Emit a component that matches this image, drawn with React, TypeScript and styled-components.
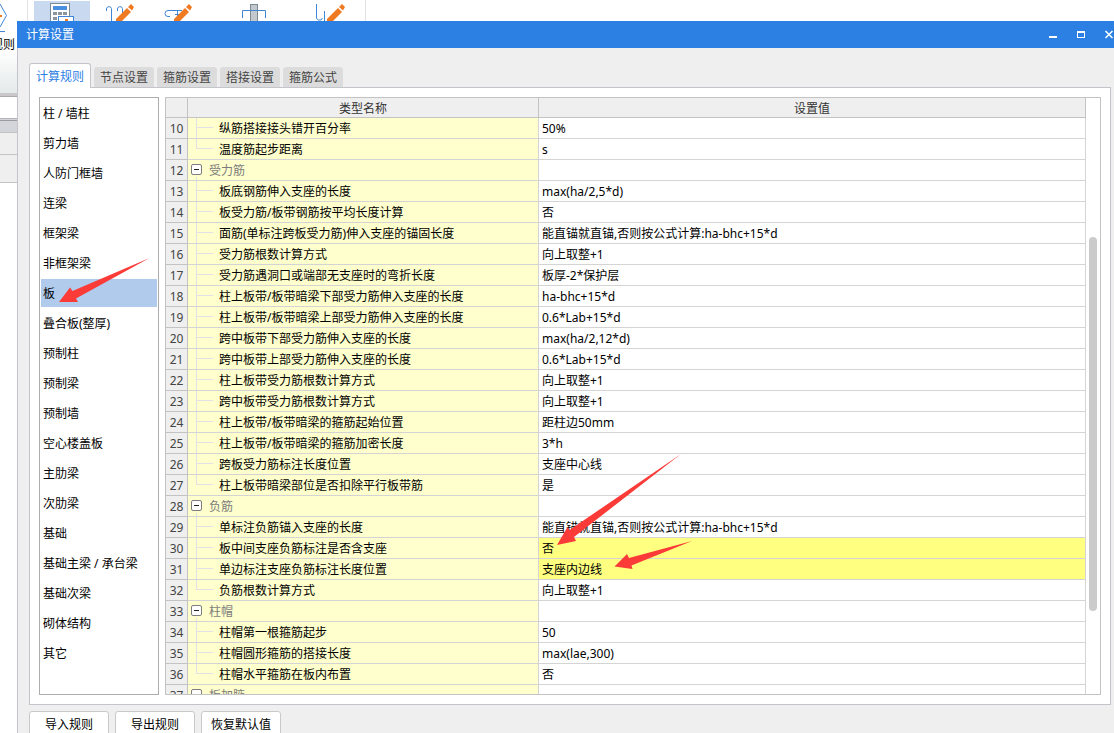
import React, { useState } from "react";
import styled, { createGlobalStyle, css } from "styled-components";

const GlobalStyle = createGlobalStyle`
  * { box-sizing: border-box; }
  body {
    margin: 0;
    overflow: hidden;
    background: #fff;
    font: 12px/18px "Noto Sans", "Noto Sans CJK SC", sans-serif;
    color: #000;
  }
  button { font: inherit; color: inherit; border: 0; padding: 0; background: none; cursor: default; }
`;

const line = "#c3c3c3";
const softLine = "#d4d4d4";
const treeLine = "#e0e0e6";

const Page = styled.main`
  position: relative;
  height: 100vh;
  overflow: hidden;
`;

/* ---------- main window behind the dialog ---------- */

const Backdrop = styled.div`
  display: flex;
`;

const SideStrip = styled.div`
  display: flex;
  flex-direction: column;
  flex: none;
  width: 28px;
`;

const RuleTool = styled.button`
  display: flex;
  flex-direction: column;
  align-items: flex-end;
  width: 28px;
  height: 93px;
  padding-right: 12px;
  border-right: 1px solid #e3e3e3;
  background: linear-gradient(#fff 50px, #e4e9e9);
  overflow: hidden;
`;

const RuleLabel = styled.span`
  flex: none;
  white-space: nowrap;
`;

const StripBand = styled.div<{ $height: number; $fill: string; $edge?: string }>`
  height: ${(p) => p.$height}px;
  background: ${(p) => p.$fill};
  border-bottom: ${(p) => (p.$edge ? `1px solid ${p.$edge}` : "0")};
`;

const Ribbon = styled.div`
  display: flex;
  height: 48px;
  padding: 1px 0 0 6px;
  width: 338px;
  border-right: 1px solid #e3e3e3;
`;

const RibbonButton = styled.button<{ $active?: boolean; $width: number }>`
  width: ${(p) => p.$width}px;
  display: flex;
  justify-content: center;
  background: ${(p) => (p.$active ? "#c8d9f0" : "transparent")};
`;

/* ---------- dialog ---------- */

const Dialog = styled.section`
  position: absolute;
  inset: 21px 0 -12px 17px;
  display: flex;
  flex-direction: column;
  background: #efefef;
`;

const TitleBar = styled.header`
  display: flex;
  align-items: center;
  flex: none;
  height: 27px;
  padding-left: 9px;
  background: #2d80e3;
  color: #fff;
`;

const Title = styled.h1`
  flex: 1;
  margin: 0;
  font: inherit;
`;

const WindowButton = styled.button`
  display: flex;
  justify-content: center;
  width: 28px;
`;

const WindowButtons = styled.div`
  display: flex;
  margin-right: -9px;
`;

const Body = styled.div`
  display: flex;
  flex-direction: column;
  flex: 1;
  min-height: 0;
  padding: 15px 3px 0 11px;
  border-left: 1px solid #c4c5ca;
`;

const Tabs = styled.div`
  display: flex;
  align-items: flex-end;
  gap: 3px;
  flex: none;
  height: 25px;
  margin-bottom: -1px;
`;

const Tab = styled.button<{ $active: boolean }>`
  width: 60px;
  height: 20px;
  margin-bottom: 1px;
  padding-top: 2px;
  border-radius: 3px 3px 0 0;
  background: #dcdcdc;
  color: #444;
  ${(p) =>
    p.$active &&
    css`
      width: 62px;
      height: 25px;
      margin-bottom: 0;
      border: 1px solid #c4c5ca;
      border-bottom: 0;
      background: #fff;
      color: #2d80e3;
      z-index: 1;
    `}
`;

const Panel = styled.div`
  display: flex;
  gap: 6px;
  flex: 1;
  min-height: 0;
  padding: 9px;
  border: 1px solid #c4c5ca;
  background: #fff;
`;

const Categories = styled.nav`
  display: flex;
  flex-direction: column;
  gap: 2px;
  flex: none;
  width: 120px;
  padding: 1px;
  border: 1px solid #adadad;
  overflow: hidden;
`;

const Category = styled.button<{ $active: boolean }>`
  flex: none;
  height: 28px;
  padding: 2px 0 0 2px;
  text-align: left;
  background: ${(p) => (p.$active ? "#b1cbec" : "transparent")};
`;

const Grid = styled.div`
  display: flex;
  flex: 1;
  min-width: 0;
  border: 1px solid ${line};
  overflow: hidden;
`;

const TableView = styled.div`
  flex: 1;
  min-width: 0;
  overflow: hidden;
`;

const Table = styled.table`
  width: 100%;
  table-layout: fixed;
  border-spacing: 0;
`;

const Col = styled.col<{ $width?: number }>`
  width: ${(p) => (p.$width ? `${p.$width}px` : "auto")};
`;

const Head = styled.th`
  height: 20px;
  padding: 2px 0 0;
  line-height: 17px;
  border: solid ${line};
  border-width: 0 1px 1px 0;
  background: #efefef;
  color: #333;
  font-weight: normal;
`;

const Cell = styled.td`
  height: 21px;
  padding: 2px 0 0;
  border: solid ${softLine};
  border-width: 0 1px 1px 0;
  white-space: nowrap;
`;

const NumberCell = styled(Cell)`
  border-color: ${line};
  background: #efefef;
  color: #444;
  text-align: center;
`;

const NameCell = styled(Cell)`
  padding: 0;
  background: #ffffcd;
`;

const ValueCell = styled(Cell)<{ $marked?: boolean }>`
  padding-left: 3px;
  background: ${(p) => (p.$marked ? "#ffff80" : "#fff")};
`;

const Leaf = styled.div`
  display: flex;
  gap: 6px;
  height: 20px;
  padding-left: 8px;
  line-height: 22px;
`;

const Branch = styled.span<{ $last?: boolean }>`
  width: 17px;
  background:
    linear-gradient(${treeLine}, ${treeLine}) 0 0 / 1px ${(p) => (p.$last ? "10px" : "100%")} no-repeat,
    linear-gradient(${treeLine}, ${treeLine}) 0 9px / 17px 1px no-repeat;
`;

const Group = styled.div`
  display: flex;
  align-items: flex-start;
  gap: 7px;
  height: 20px;
  padding-left: 3px;
  line-height: 22px;
  color: #7c7c7c;
  background: linear-gradient(${treeLine}, ${treeLine}) 8px 100% / 1px 3px no-repeat;
`;

const Toggle = styled.button`
  display: flex;
  align-items: center;
  justify-content: center;
  width: 11px;
  height: 11px;
  margin-top: 4px;
  border: 1px solid #7e7e7e;
  border-radius: 2px;
  background: #fff;
  &::before {
    content: "";
    width: 5px;
    height: 1px;
    background: #222;
  }
`;

const ScrollTrack = styled.div`
  flex: none;
  width: 14px;
  padding: 139px 3px 0;
`;

const ScrollThumb = styled.div`
  height: 374px;
  border-radius: 4px;
  background: #cbcbcb;
`;

const Footer = styled.footer`
  display: flex;
  gap: 6px;
  flex: none;
  padding: 6px 0 8px;
`;

const FooterButton = styled.button`
  width: 80px;
  height: 26px;
  padding-top: 2px;
  border: 1px solid #c9c9c9;
  border-radius: 3px;
  background: #fff;
`;

const Annotations = styled.svg`
  position: absolute;
  top: 0;
  left: 0;
  pointer-events: none;
`;

/* ---------- data ---------- */

const tabs = ["计算规则", "节点设置", "箍筋设置", "搭接设置", "箍筋公式"];

const categories = [
  "柱 / 墙柱", "剪力墙", "人防门框墙", "连梁", "框架梁", "非框架梁", "板",
  "叠合板(整厚)", "预制柱", "预制梁", "预制墙", "空心楼盖板", "主肋梁", "次肋梁",
  "基础", "基础主梁 / 承台梁", "基础次梁", "砌体结构", "其它",
];

type Row = { name: string; value?: string; group?: boolean; last?: boolean; marked?: boolean };

const firstRow = 10;
const rows: Row[] = [
  { name: "纵筋搭接接头错开百分率", value: "50%" },
  { name: "温度筋起步距离", value: "s", last: true },
  { name: "受力筋", group: true },
  { name: "板底钢筋伸入支座的长度", value: "max(ha/2,5*d)" },
  { name: "板受力筋/板带钢筋按平均长度计算", value: "否" },
  { name: "面筋(单标注跨板受力筋)伸入支座的锚固长度", value: "能直锚就直锚,否则按公式计算:ha-bhc+15*d" },
  { name: "受力筋根数计算方式", value: "向上取整+1" },
  { name: "受力筋遇洞口或端部无支座时的弯折长度", value: "板厚-2*保护层" },
  { name: "柱上板带/板带暗梁下部受力筋伸入支座的长度", value: "ha-bhc+15*d" },
  { name: "柱上板带/板带暗梁上部受力筋伸入支座的长度", value: "0.6*Lab+15*d" },
  { name: "跨中板带下部受力筋伸入支座的长度", value: "max(ha/2,12*d)" },
  { name: "跨中板带上部受力筋伸入支座的长度", value: "0.6*Lab+15*d" },
  { name: "柱上板带受力筋根数计算方式", value: "向上取整+1" },
  { name: "跨中板带受力筋根数计算方式", value: "向上取整+1" },
  { name: "柱上板带/板带暗梁的箍筋起始位置", value: "距柱边50mm" },
  { name: "柱上板带/板带暗梁的箍筋加密长度", value: "3*h" },
  { name: "跨板受力筋标注长度位置", value: "支座中心线" },
  { name: "柱上板带暗梁部位是否扣除平行板带筋", value: "是", last: true },
  { name: "负筋", group: true },
  { name: "单标注负筋锚入支座的长度", value: "能直锚就直锚,否则按公式计算:ha-bhc+15*d" },
  { name: "板中间支座负筋标注是否含支座", value: "否", marked: true },
  { name: "单边标注支座负筋标注长度位置", value: "支座内边线", marked: true },
  { name: "负筋根数计算方式", value: "向上取整+1", last: true },
  { name: "柱帽", group: true },
  { name: "柱帽第一根箍筋起步", value: "50" },
  { name: "柱帽圆形箍筋的搭接长度", value: "max(lae,300)" },
  { name: "柱帽水平箍筋在板内布置", value: "否", last: true },
  { name: "板加腋", group: true },
];

/* ---------- drawings ---------- */

const Pencil = ({ x }: { x: number }) => (
  <g transform={`translate(${x} 0)`} fill="#f07a22" stroke="none">
    <path d="M2 20V18L13 7 17 11 8 20Z" />
    <path d="M14 6 17 3 20 6 18 9.500Z" />
  </g>
);

const HexIcon = () => (
  <svg width="15" height="36" viewBox="0 0 15 36" fill="none" stroke="#3f86d6">
    <path d="M0 4 6.500 15.500 0 27M0 31.500H5" />
    <path d="M0 16H2" stroke="#f07a22" strokeWidth="2" />
  </svg>
);

const CalculatorIcon = () => (
  <svg width="24" height="20" viewBox="0 0 24 20">
    <rect x=".5" y="2.500" width="19" height="22" fill="#fff" stroke="#7c8a94" />
    <rect x="3" y="5" width="14" height="4" fill="#4a90e0" />
    <path d="M3 11h4v3H3zM8 11h4v3H8zM13 11h4v3h-4zM3 16h4v3H3z" fill="#8a959d" />
    <rect x="8.500" y="15.500" width="15" height="8" fill="#fff" stroke="#3f86d6" />
    <rect x="15" y="18" width="3" height="3" fill="#f07a22" />
  </svg>
);

const HooksIcon = () => (
  <svg width="30" height="20" viewBox="0 0 30 20" fill="none" stroke="#3f86d6">
    <path d="M1.500 10V9a2.500 2.500 0 0 1 5-1.500V20M12.500 10V9a2.500 2.500 0 0 1 5-1.500V12" />
    <Pencil x={9} />
  </svg>
);

const BarIcon = () => (
  <svg width="30" height="20" viewBox="0 0 30 20" fill="none" stroke="#3f86d6">
    <path d="M19 9.500H5a3 3 0 0 0 0 6h2M12 13.500h4M14.500 9.500V17" />
    <Pencil x={9} />
  </svg>
);

const ColumnIcon = () => (
  <svg width="24" height="20" viewBox="0 0 24 20" fill="none">
    <rect x="8.500" y="3.500" width="7" height="20" fill="#c3c8cc" stroke="#7c8a94" />
    <path d="M.5 17V9.500h23V17" stroke="#3f86d6" />
  </svg>
);

const StirrupIcon = () => (
  <svg width="30" height="20" viewBox="0 0 30 20" fill="none" stroke="#3f86d6">
    <path d="M1.500 3v12a3 3 0 0 0 6 2M9.500 10v10" />
    <Pencil x={10} />
  </svg>
);

const ribbonTools = [
  { label: "计算设置", icon: <CalculatorIcon />, width: 56, active: true },
  { label: "钢筋弯钩", icon: <HooksIcon />, width: 60 },
  { label: "钢筋编辑", icon: <BarIcon />, width: 56 },
  { label: "柱", icon: <ColumnIcon />, width: 96 },
  { label: "箍筋编辑", icon: <StirrupIcon />, width: 56 },
];

const windowControls = [
  { label: "最小化", icon: <path d="M1 6h8v2H1z" fill="#fff" /> },
  { label: "最大化", icon: <path d="M1 1h8v7H1zM2 3v4h6V3z" fill="#fff" fillRule="evenodd" /> },
  { label: "关闭", icon: <path d="M1.500 1 8.500 8M8.500 1 1.500 8" stroke="#fff" strokeWidth="1.500" /> },
];

export default function App() {
  const [tab, setTab] = useState(0);
  const [category, setCategory] = useState(6);

  return (
    <Page>
      <GlobalStyle />
      <Backdrop>
        <SideStrip>
          <RuleTool>
            <HexIcon />
            <RuleLabel>计算规则</RuleLabel>
          </RuleTool>
          <StripBand $height={4} $fill="#c9c9cc" $edge="#a9a9ad" />
          <StripBand $height={22} $fill="#fff" $edge="#b4b4b6" />
          <StripBand $height={2} $fill="#d3d5db" $edge="#9b9ca0" />
          <StripBand $height={12} $fill="#d3d5db" $edge={line} />
          <StripBand $height={22} $fill="#efefef" $edge={line} />
          <StripBand $height={28} $fill="#efefef" $edge={line} />
        </SideStrip>
        <Ribbon>
          {ribbonTools.map((t) => (
            <RibbonButton key={t.label} aria-label={t.label} $active={t.active} $width={t.width}>
              {t.icon}
            </RibbonButton>
          ))}
        </Ribbon>
      </Backdrop>

      <Dialog role="dialog" aria-labelledby="dialog-title">
        <TitleBar>
          <Title id="dialog-title">计算设置</Title>
          <WindowButtons>
            {windowControls.map((c) => (
              <WindowButton key={c.label} aria-label={c.label}>
                <svg width="10" height="9" viewBox="0 0 10 9">{c.icon}</svg>
              </WindowButton>
            ))}
          </WindowButtons>
        </TitleBar>
        <Body>
          <Tabs role="tablist">
            {tabs.map((t, i) => (
              <Tab key={t} role="tab" aria-selected={i === tab} $active={i === tab} onClick={() => setTab(i)}>
                {t}
              </Tab>
            ))}
          </Tabs>
          <Panel role="tabpanel">
            <Categories>
              {categories.map((c, i) => (
                <Category key={c} $active={i === category} onClick={() => setCategory(i)}>
                  {c}
                </Category>
              ))}
            </Categories>
            <Grid>
              <TableView>
                <Table>
                  <colgroup>
                    <Col $width={22} />
                    <Col $width={351} />
                    <Col />
                  </colgroup>
                  <thead>
                    <tr>
                      <Head />
                      <Head>类型名称</Head>
                      <Head>设置值</Head>
                    </tr>
                  </thead>
                  <tbody>
                    {rows.map((r, i) => (
                      <tr key={i}>
                        <NumberCell>{firstRow + i}</NumberCell>
                        <NameCell>
                          {r.group ? (
                            <Group>
                              <Toggle aria-label={`折叠${r.name}`} />
                              {r.name}
                            </Group>
                          ) : (
                            <Leaf>
                              <Branch $last={r.last} />
                              {r.name}
                            </Leaf>
                          )}
                        </NameCell>
                        <ValueCell $marked={r.marked}>{r.value}</ValueCell>
                      </tr>
                    ))}
                  </tbody>
                </Table>
              </TableView>
              <ScrollTrack>
                <ScrollThumb />
              </ScrollTrack>
            </Grid>
          </Panel>
          <Footer>
            <FooterButton>导入规则</FooterButton>
            <FooterButton>导出规则</FooterButton>
            <FooterButton>恢复默认值</FooterButton>
          </Footer>
        </Body>
      </Dialog>

      <Annotations width="700" height="600" viewBox="0 0 700 600" fill="#fb3b37" aria-hidden="true">
        <path d="M59 302 70 287.500 72.500 291 149.500 258 76 298.500 78 302Z" />
        <path d="M557 545 567.500 527 569.500 530 681 454 574 537 576 541Z" />
        <path d="M614.500 566.500 627 554 629 558 692 541 631.500 565.500 632.500 569Z" />
      </Annotations>
    </Page>
  );
}
